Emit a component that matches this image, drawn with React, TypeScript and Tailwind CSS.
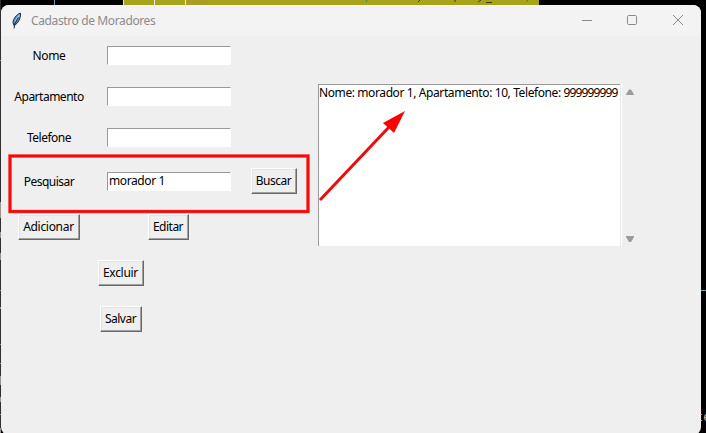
import type { ReactNode } from "react";

function Label({ children, className = "" }: { children: ReactNode; className?: string }) {
  return <span className={`flex w-[96px] justify-center pt-[2px] whitespace-nowrap ${className}`}>{children}</span>;
}

function Entry({ value = "" }: { value?: string }) {
  return (
    <div className="flex h-[19px] w-[124px] items-center border border-r-white border-b-white border-t-[#999] border-l-[#999] bg-white pl-px tracking-[-0.4px] whitespace-pre">
      {value}
    </div>
  );
}

function Button({ children, className }: { children: ReactNode; className: string }) {
  return (
    <button className={`flex h-[26px] shrink-0 items-center justify-center pr-px whitespace-nowrap border border-t-white border-l-white border-r-[#696969] border-b-[#696969] bg-[#efefef] shadow-[inset_-1px_-1px_0_#a0a0a0,inset_1px_1px_0_#e3e3e3] ${className}`}>
      {children}
    </button>
  );
}

function Feather() {
  return (
    <svg width="12" height="18" viewBox="0 0 12 18" className="shrink-0">
      <path d="M9.5 1.2C5.5 2.2 2 7 2 10.8L3 13.5C7.2 11.6 9.7 6.2 9.5 1.2Z" fill="#5b93cc" stroke="#1b2738" strokeWidth="1" />
      <path d="M8.4 3 4.2 9.5" stroke="#9cc8ed" strokeWidth="1.4" />
      <path d="M7.3 5.4 3.7 12.2 3 16.5" fill="none" stroke="#111722" strokeWidth=".9" />
    </svg>
  );
}

function TitleBar() {
  return (
    <header className="flex h-[31px] items-center bg-[#f3f3f3] pl-[10px] text-[#8b8b8b]">
      <Feather />
      <span className="ml-[8px] w-[128px] whitespace-nowrap text-[12px] tracking-[-0.38px]">Cadastro de Moradores</span>
      <svg className="ml-auto" width="122" height="30" fill="none" stroke="#8b8b8b">
        <path d="M3 14.5H13M94 9 104 19M104 9 94 19" />
        <rect x="48.5" y="9.5" width="9" height="9" rx="1" />
      </svg>
    </header>
  );
}

export default function App() {
  return (
    <div className="relative flex h-[433px] w-[706px] overflow-hidden bg-black pt-[5px] pl-px font-['Noto_Sans','Open_Sans',sans-serif] text-[12px] leading-[16px] tracking-[-0.5px] text-black">
      <svg className="absolute inset-0 tracking-normal" width="706" height="433">
        <path d="M123 0H539V5H123Z" fill="#a6a519" />
        <path d="M186 0H208V5H186Z" fill="#aa9d25" />
        <path d="M123.5 0V5M154.5 0V5M185.5 0V5" stroke="#eeeedc" />
        <path d="M54.5 0V5M701 290.5H706" stroke="#759aaa" />
        <path d="M366 0 367 2M526 2 528 0" stroke="#398047" />
        <path d="M418 2 420 0M455 0V2M478 2 481 0M486 2.5H492" stroke="#39391b" />
        <path d="M.5 0V433" stroke="#302e30" />
        <path d="M.5 60V61M.5 202V218M.5 232V238M.5 253V260M.5 290V291M.5 307V309M.5 344V345M.5 363V364M.5 376V385M.5 397V402M.5 414V415M.5 428V433" stroke="#9a928b" />
        <text x="696" y="421" fill="#d6b8b5" fontFamily="Liberation Mono, monospace" fontSize="12">te</text>
      </svg>
      <main className="relative h-[430px] w-[700px] shrink-0 overflow-hidden rounded-lg bg-[#efefef]">
        <TitleBar />
        <div className="flex">
          <section className="w-[317px] pt-[10px]">
            <div className="grid grid-cols-[106px_124px] gap-y-[22px]">
              <Label className="tracking-[-0.3px]">Nome</Label><Entry />
              <Label>Apartamento</Label><Entry />
              <Label>Telefone</Label><Entry />
            </div>
            <div className="mt-[21px] flex h-[26px] items-center">
              <Label className="mr-[10px] pt-0">Pesquisar</Label>
              <Entry value="morador 1" />
              <Button className="ml-[20px] w-[46px]">Buscar</Button>
            </div>
            <div className="mt-[20px] flex pl-[17px]">
              <Button className="w-[62px] tracking-[-0.3px]">Adicionar</Button>
              <Button className="ml-[68px] w-[41px]">Editar</Button>
            </div>
            <div className="mt-[20px] flex pl-[97px]"><Button className="w-[46px] tracking-[-0.3px]">Excluir</Button></div>
            <div className="mt-[20px] flex pl-[99px]"><Button className="w-[42px]">Salvar</Button></div>
          </section>
          <section className="mt-[48px] flex h-[162px]">
            <div className="w-[302px] border-t border-l border-t-[#999] border-l-[#999] bg-white whitespace-nowrap tracking-[-0.4px]">
              Nome: morador 1, Apartamento: 10, Telefone: <span className="tracking-[-0.86px]">999999999</span>
            </div>
            <div className="w-[2px] border-l border-l-[#e8e8e8] bg-white" />
            <svg width="18" height="162" fill="#9b9b9b">
              <path d="M4 10.5 7 5.5H9L12 10.5V11H4Z" />
              <path d="M4 152V153L7 158H9L12 153V152Z" />
            </svg>
          </section>
        </div>
      </main>
      <svg className="pointer-events-none absolute inset-0" width="706" height="433">
        <rect x="10" y="156" width="298" height="55.5" fill="none" stroke="#ff9c9c" strokeWidth="4" />
        <rect x="10" y="156" width="298" height="55.5" fill="none" stroke="#f00c0c" strokeWidth="2.8" />
        <path d="M320 200 390 126" stroke="#ec0c0c" strokeWidth="3" />
        <path d="M405 111 383 123 394 133Z" fill="#f00" />
      </svg>
    </div>
  );
}
